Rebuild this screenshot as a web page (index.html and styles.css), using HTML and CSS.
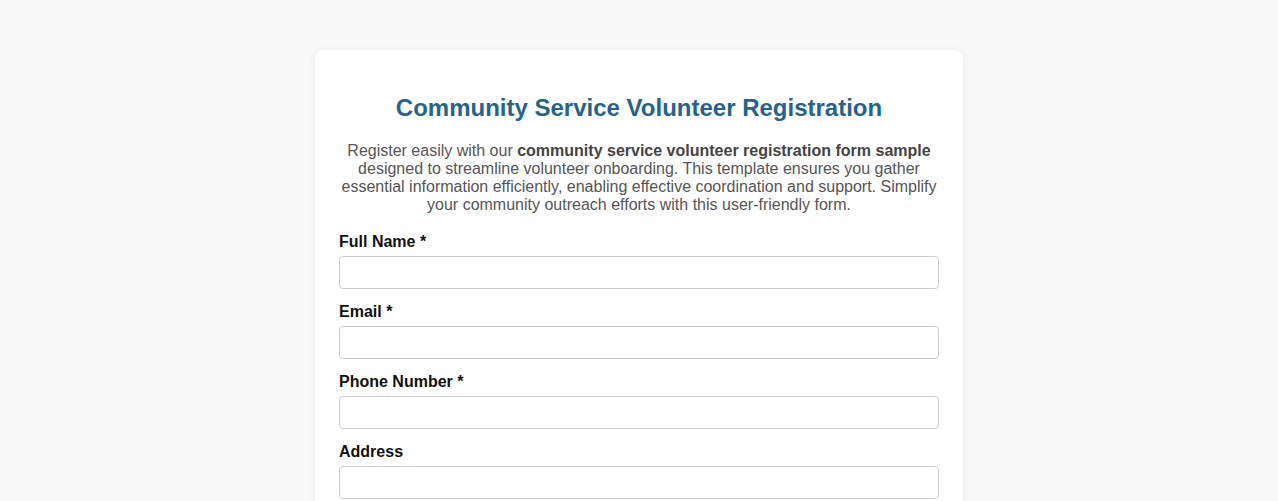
FILE: index.html
```html
<!DOCTYPE html>
<html lang="en">
<head>
<meta charset="utf-8">
<title>Community Service Volunteer Registration</title>
<link rel="stylesheet" href="styles.css">
</head>
<body>
<div class="card">
  <h1 class="title">Community Service Volunteer Registration</h1>
  <p class="intro">Register easily with our <strong>community service volunteer registration form sample</strong> designed to streamline volunteer onboarding. This template ensures you gather essential information efficiently, enabling effective coordination and support. Simplify your community outreach efforts with this user-friendly form.</p>
  <form class="form">
    <div class="field">
      <label class="label" for="name">Full Name *</label>
      <input class="input" id="name" type="text">
    </div>
    <div class="field">
      <label class="label" for="email">Email *</label>
      <input class="input" id="email" type="email">
    </div>
    <div class="field">
      <label class="label" for="phone">Phone Number *</label>
      <input class="input" id="phone" type="tel">
    </div>
    <div class="field">
      <label class="label" for="address">Address</label>
      <input class="input" id="address" type="text">
    </div>
  </form>
</div>
</body>
</html>
```
FILE: styles.css
```css
html, body {
  margin: 0;
  padding: 0;
}
body {
  background: #f9f9f9;
  font-family: "Liberation Sans", Arial, sans-serif;
  color: #333;
  padding: 50px 0;
}
.card {
  width: 600px;
  margin: 0 auto;
  background: #fff;
  border-radius: 8px;
  padding: 24px;
  box-shadow: 0 0 10px rgba(0, 0, 0, 0.06);
}
.title {
  font-size: 24px;
  font-weight: bold;
  color: #25638f;
  text-align: center;
  margin: 20px 0;
}
.intro {
  font-size: 16px;
  color: #555;
  text-align: center;
  margin: 0 0 19px;
  line-height: 18px;
}
.intro strong {
  color: #444;
}
.form {
  display: flex;
  flex-direction: column;
}
.field {
  display: flex;
  flex-direction: column;
  margin-bottom: 14px;
}
.label {
  font-size: 16px;
  font-weight: bold;
  color: #111;
  margin-bottom: 5px;
}
.input {
  box-sizing: border-box;
  width: 100%;
  height: 33px;
  padding: 8px;
  font-size: 14px;
  font-family: inherit;
  border: 1px solid #ccc;
  border-radius: 4px;
  background: #fff;
  margin: 0;
}
```
